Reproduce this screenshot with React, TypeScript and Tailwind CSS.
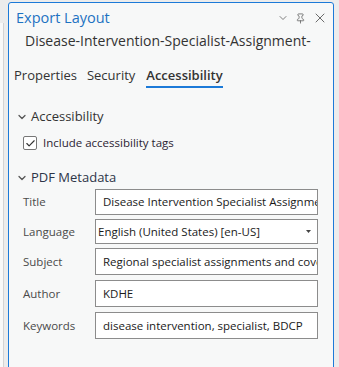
import { ChevronDown, Pin, X, Check } from "lucide-react";

const font = { fontFamily: '"Open Sans", "Noto Sans", sans-serif' };

function Field({ label, value, select, className }: { label: string; value: string; select?: boolean; className?: string }) {
  return (
    <div className={`flex items-center ${className ?? ""}`}>
      <div className="w-[86px] pl-[14px] text-[11.5px] text-[#4a4a4a] shrink-0">{label}</div>
      <div className="w-[223px] h-full border border-[#8c8c8c] bg-white flex items-center overflow-hidden">
        <span className={`whitespace-nowrap text-[11.5px] text-[#1a1a1a] ${select ? "pl-[2px]" : "pl-[7px]"}`}>{value}</span>
        {select && (
          <svg width="5" height="3" viewBox="0 0 5 3" className="ml-auto mr-[6px] shrink-0">
            <path d="M0 0h5L2.5 3z" fill="#444" />
          </svg>
        )}
      </div>
    </div>
  );
}

export default function App() {
  return (
    <div className="w-[339px] h-[367px] bg-[#ececec] flex overflow-hidden" style={font}>
      <div className="w-[8px] shrink-0 pt-[23px]">
        <div className="w-[4px] h-full bg-[#f9f9f9] border-r border-[#d4d4d4]" />
      </div>
      <div className="mt-[2px] w-[326px] h-[400px] bg-[#f7f8f8] border border-[#1c7ad8] rounded-t-[3px] flex flex-col">
        <div className="flex items-center h-[30px] pl-[7px] pr-[5px]">
          <span className="text-[14.5px] text-[#1d72c2] leading-none">Export Layout</span>
          <div className="ml-auto flex items-center gap-[6px] text-[#555]">
            <ChevronDown size={12} strokeWidth={1.5} />
            <Pin size={11} strokeWidth={1.6} />
            <X size={16} strokeWidth={1.3} />
          </div>
        </div>
        <div className="h-[16px] flex items-center pl-[16px] text-[14px] text-[#333] leading-none whitespace-nowrap">
          Disease-Intervention-Specialist-Assignment-
        </div>
        <div className="flex items-start pl-[5px] mt-[16px] text-[13px] text-[#333]">
          <span className="h-[20px] leading-[20px]">Properties</span>
          <span className="h-[20px] leading-[20px] ml-[10px]">Security</span>
          <span className="h-[23px] leading-[20px] ml-[11px] font-semibold pb-[1px] border-b-2 border-[#1c7ad8]">Accessibility</span>
        </div>
        <div className="flex items-center h-[20px] mt-[19px] pl-[7px] text-[13px] text-[#333]">
          <ChevronDown size={12} strokeWidth={2.5} className="text-[#555]" />
          <span className="ml-[3px]">Accessibility</span>
        </div>
        <div className="flex items-center h-[14px] mt-[9px] pl-[14px]">
          <div className="w-[14px] h-[14px] border border-[#777] rounded-[2px] bg-white flex items-center justify-center">
            <Check size={11} strokeWidth={2.5} className="text-[#333]" />
          </div>
          <span className="ml-[6px] text-[11.5px] text-[#2c2433]">Include accessibility tags</span>
        </div>
        <div className="flex items-center h-[20px] mt-[18px] pl-[7px] text-[13px] text-[#2d3548]">
          <ChevronDown size={12} strokeWidth={2.5} className="text-[#555]" />
          <span className="ml-[3px]">PDF Metadata</span>
        </div>
        <div className="flex flex-col mt-[1px]">
          <Field label="Title" value="Disease Intervention Specialist Assignments" className="h-[26px]" />
          <Field label="Language" value="English (United States) [en-US]" select className="h-[25px] mt-[4px]" />
          <Field label="Subject" value="Regional specialist assignments and coverage" className="h-[27px] mt-[4px]" />
          <Field label="Author" value="KDHE" className="h-[27px] mt-[5px]" />
          <Field label="Keywords" value="disease intervention, specialist, BDCP" className="h-[27px] mt-[5px]" />
        </div>
      </div>
    </div>
  );
}
